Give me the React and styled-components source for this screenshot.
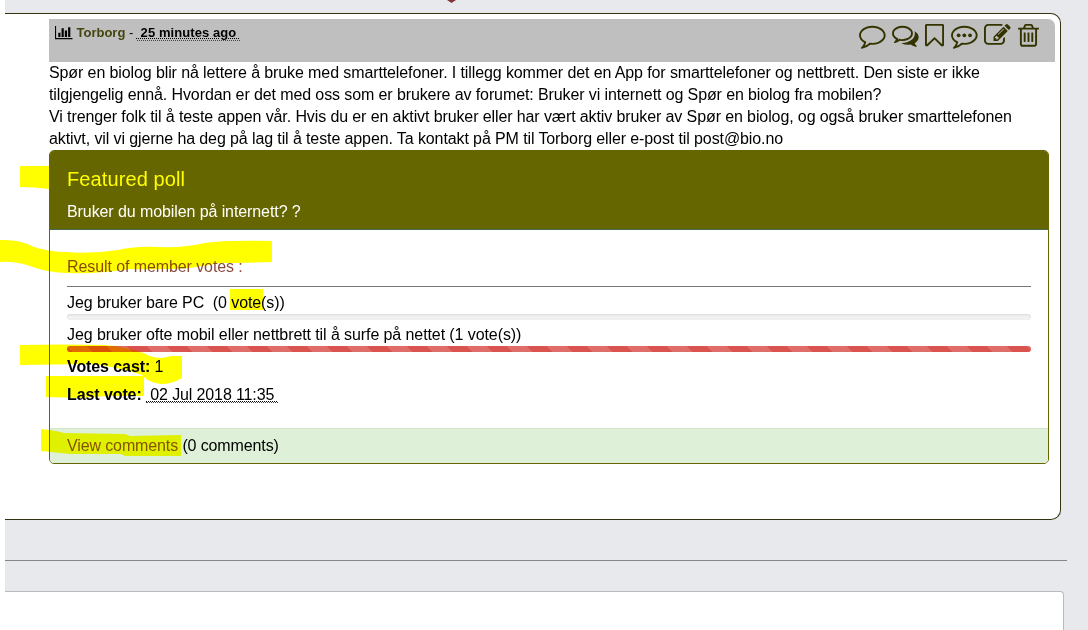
import React from "react";
import styled, { createGlobalStyle } from "styled-components";

const GlobalStyle = createGlobalStyle`
  * { box-sizing: border-box; }
  body {
    margin: 0;
    background: #fff;
    color: #000;
    font: 16px/22px "Liberation Sans", Arial, sans-serif;
    overflow: hidden;
  }
`;

const Page = styled.main`
  position: relative;
  height: 630px;
  margin-left: 5px;
  padding-top: 13px;
  background: #e8e9ed;
  overflow: hidden;
`;

const Post = styled.article`
  width: 1056px;
  height: 507px;
  padding: 5px 5px 0 44px;
  background: #fff;
  border: 1px solid #33330f;
  border-left: 0;
  border-radius: 0 10px 10px 0;
`;

const PostHeader = styled.header`
  display: flex;
  justify-content: space-between;
  height: 43px;
  padding: 3px 16.5px 0 6px;
  background: #bfbfbf;
  border-radius: 0 7px 0 0;
`;

const Byline = styled.div`
  display: flex;
  align-items: center;
  height: 22px;
  font-size: 13px;
  white-space: pre;
`;

const Author = styled.a`
  margin-left: 4px;
  color: #45450f;
  font-weight: bold;
`;

const Stamp = styled.abbr`
  display: inline-block;
  height: ${(p) => (p.$bold ? "16px" : "17px")};
  line-height: ${(p) => (p.$bold ? "16px" : "17px")};
  font-weight: ${(p) => (p.$bold ? "bold" : "normal")};
  letter-spacing: ${(p) => (p.$bold ? "0.08px" : "-0.13px")};
  text-decoration: underline dotted 1px;
  text-underline-offset: 1px;
  text-decoration-skip-ink: auto;
  border-bottom: 1px dotted #444;
  white-space: pre;
`;

const Actions = styled.nav`
  display: flex;
  gap: 6.6px;
  color: #333300;
`;

const Glyph = styled.svg`
  display: block;
  flex: none;
  width: ${(p) => p.$w}px;
  height: ${(p) => p.$h}px;
  fill: currentColor;
`;

const PostBody = styled.p`
  margin: 0;
  letter-spacing: -0.106px;
  white-space: pre;
`;

const Poll = styled.section`
  width: 1000px;
  height: 314px;
  border: 1px solid #666600;
  border-radius: 5px;
  letter-spacing: -0.09px;
  overflow: hidden;
`;

const PollHeader = styled.header`
  height: 79px;
  padding: 16px 17px 0;
  background: #666600;
  border-bottom: 1px solid #4c6a55;
  color: #fff;
`;

const PollTitle = styled.h3`
  margin: 0 0 10px;
  font-size: 20px;
  font-weight: normal;
  line-height: 24px;
  letter-spacing: 0.1px;
  color: #ffff00;
`;

const PollBody = styled.div`
  height: 198px;
  padding: 26px 17px 0;
`;

const ResultHeading = styled.div`
  height: 31px;
  color: #8a4a3c;
  border-bottom: 1px solid #77777a;
`;

const Option = styled.div`
  padding-top: ${(p) => (p.$first ? "5px" : "4px")};
`;

const Track = styled.div`
  height: 6px;
  border-radius: 3px;
  background: #f1f1f1;
  box-shadow: inset 0 1px 2px rgba(0, 0, 0, 0.1);
  overflow: hidden;
`;

const Fill = styled.div`
  height: 100%;
  background-color: #d9534f;
  background-image: linear-gradient(
    45deg,
    rgba(255, 255, 255, 0.15) 25%, transparent 25%, transparent 50%,
    rgba(255, 255, 255, 0.15) 50%, rgba(255, 255, 255, 0.15) 75%, transparent 75%
  );
  background-size: 40px 40px;
`;

const Fact = styled.div`
  height: 28px;
  padding-top: 4px;
  white-space: pre;
`;

const PollFooter = styled.footer`
  height: 35px;
  padding: 6px 17px;
  background: #dff0d8;
  border-top: 1px solid #d3e3cc;
  letter-spacing: -0.12px;
`;

const CommentsLink = styled.a`
  color: #84532b;
`;

const Divider = styled.hr`
  width: 1062px;
  height: 1px;
  margin: 40px 0 30px;
  border: 0;
  background: #85858a;
`;

const NextPanel = styled.section`
  width: 1059px;
  height: 60px;
  background: #fff;
  border: 1px solid #b9b9bf;
  border-left: 0;
  border-radius: 0 4px 4px 0;
`;

const Ink = styled.svg`
  position: absolute;
  left: 0;
  top: 0;
  pointer-events: none;
  mix-blend-mode: multiply;
`;

const bubble =
  "M896 384q-204 0-381.500 69.500t-282 187.500-104.500 255q0 112 71.500 213.500t201.500 175.500l87 50-27 96q-24 91-70 172 152-63 275-171l43-38 57 6q69 8 130 8 204 0 381.500-69.500t282-187.500 104.500-255-104.500-255-282-187.500-381.500-69.500zm896 512q0 174-120 321.500t-326 233-450 85.500q-70 0-145-8-198 175-460 242-49 14-114 22h-5q-15 0-27-10.500t-16-27.500v-1q-3-4-.5-12t2-10 4.500-9.500l6-9 7-8.500 8-9q7-8 31-34.500t34.500-38 31-39.500 32.500-51 27-59 26-76q-157-89-247.500-220t-90.500-281q0-130 71-248.500t191-204.500 286-136.500 348-50.500 348 50.500 286 136.500 191 204.500 71 248.500z";

const actions = [
  { name: "Comment", x: 0, w: 1792, d: bubble },
  {
    name: "Discussion", x: 0, w: 1792,
    d: "M704 384q-153 0-286 52t-211.500 141-78.500 191q0 82 53 158t149 132l97 56-35 84q34-20 62-39l44-31 53 10q78 14 153 14 153 0 286-52t211.500-141 78.500-191-78.500-191-211.500-141-286-52zm0-128q191 0 353.500 68.500t256.500 186.500 94 257-94 257-256.500 186.500-353.500 68.500q-86 0-176-16-124 88-278 128-36 9-86 16h-3q-11 0-20.500-8t-11.500-21q-1-3-1-6.500t.5-6.500 2-6l2.500-5 3.500-5.500 4-5 4.500-5 4-4.500q5-6 23-25t26-29.500 22.500-29 25-38.500 20.500-44q-124-72-195-177t-71-224q0-139 94-257t256.500-186.500 353.500-68.500zm822 1169q10 24 20.500 44t25 38.500 22.500 29 26 29.500 23 25q1 1 4 4.500t4.500 5 4 5 3.500 5.500l2.500 5 2 6 .5 6.500-1 6.500q-3 14-13 22t-22 7q-50-7-86-16-154-40-278-128-90 16-176 16-271 0-472-132 58 4 88 4 161 0 309-45t264-129q125-92 192-212t67-254q0-77-23-152 129 71 204 178t75 230q0 120-71 224.500t-195 176.500z",
  },
  {
    name: "Bookmark", x: 256, w: 1280,
    d: "M1408 256h-1024v1242l423-406 89-85 89 85 423 406v-1242zm12-128q23 0 44 9 33 13 52.500 41t19.500 62v1289q0 34-19.500 62t-52.500 41q-19 8-44 8-48 0-83-32l-441-424-441 424q-36 33-83 33-23 0-44-9-33-13-52.500-41t-19.500-62v-1289q0-34 19.500-62t52.500-41q21-9 44-9h1048z",
  },
  { name: "Reply", x: 0, w: 1792, d: bubble, dots: true },
  {
    name: "Edit", x: 0, w: 1792,
    d: "M888 1184l116-116-152-152-116 116v56h96v96h56zm440-720q-16-16-33 1l-350 350q-17 17-1 33t33-1l350-350q17-17 1-33zm80 594v190q0 119-84.500 203.500t-203.500 84.500h-832q-119 0-203.500-84.500t-84.500-203.500v-832q0-119 84.500-203.500t203.500-84.500h832q63 0 117 25 15 7 18 23 3 17-9 29l-49 49q-14 14-32 8-23-6-45-6h-832q-66 0-113 47t-47 113v832q0 66 47 113t113 47h832q66 0 113-47t47-113v-126q0-13 9-22l64-64q15-15 35-7t20 29zm-96-738l288 288-672 672h-288v-288zm444 132l-92 92-288-288 92-92q28-28 68-28t68 28l152 152q28 28 28 68t-28 68z",
  },
  {
    name: "Delete", x: 192, w: 1408,
    d: "M704 736v576q0 14-9 23t-23 9h-64q-14 0-23-9t-9-23v-576q0-14 9-23t23-9h64q14 0 23 9t9 23zm256 0v576q0 14-9 23t-23 9h-64q-14 0-23-9t-9-23v-576q0-14 9-23t23-9h64q14 0 23 9t9 23zm256 0v576q0 14-9 23t-23 9h-64q-14 0-23-9t-9-23v-576q0-14 9-23t23-9h64q14 0 23 9t9 23zm128 724v-948h-896v948q0 22 7 40.500t14.500 27 10.500 8.500h832q3 0 10.500-8.500t14.500-27 7-40.500zm-672-1076h448l-48-117q-7-9-17-11h-317q-10 2-17 11zm928 32v64q0 14-9 23t-23 9h-96v948q0 83-47 143.500t-113 60.500h-832q-66 0-113-58.500t-47-141.500v-952h-96q-14 0-23-9t-9-23v-64q0-14 9-23t23-9h309l70-167q15-37 54-63t79-26h320q40 0 79 26t54 63l70 167h309q14 0 23 9t9 23z",
  },
];

const EM = 26.67;

function ActionIcon({ icon }) {
  return (
    <Glyph $w={(icon.w / 1792) * EM} $h={EM} viewBox={`${icon.x} 0 ${icon.w} 1792`} aria-label={icon.name}>
      <path d={icon.d} />
      {icon.dots && [512, 896, 1280].map((cx) => <circle key={cx} cx={cx} cy="896" r="128" />)}
    </Glyph>
  );
}

// Felt-pen marks drawn over the page; coordinates start at the window's corner.
const marks = [
  "M20 166H49V189Q34 187 20 187Z",
  "M0 240Q20 239 34 247Q50 252 66 252Q92 254 118 250Q136 246 158 247Q185 248 205 243Q222 240 272 241V262Q240 263 220 263L190 268Q158 270 130 269Q100 274 66 273Q45 272 30 266Q14 261 0 262Z",
  "M230 289H263V310H230Z",
  "M20 345Q60 344 105 345Q128 347 146 354Q152 358 162 358L171 356H182V378Q172 384 161 384Q149 383 142 375Q120 367 90 364L20 365Z",
  "M46 376H144V396Q110 395 80 398L46 397Z",
  "M41 429L56 431L64 433L125 434L130 436L181 435V456H125L121 454L70 454L41 451Z",
];

export default function App() {
  return (
    <>
      <GlobalStyle />
      <Page>
        <Post>
          <PostHeader>
            <Byline>
              <Glyph $w={17.5} $h={15.3} viewBox="0 0 2048 1792">
                <path d="M640 896v512h-256v-512h256zm384-512v1024h-256v-1024h256zm1024 1152v128h-2048v-1536h128v1408h1920zm-640-896v768h-256v-768h256zm384-384v1152h-256v-1152h256z" />
              </Glyph>
              <Author>Torborg</Author>
              {" - "}
              <Stamp $bold>{" 25 minutes ago "}</Stamp>
            </Byline>
            <Actions>
              {actions.map((icon) => <ActionIcon key={icon.name} icon={icon} />)}
            </Actions>
          </PostHeader>
          <PostBody>
            Spør en biolog blir nå lettere å bruke med smarttelefoner. I tillegg kommer det en App for smarttelefoner og nettbrett. Den siste er ikke<br />
            tilgjengelig ennå. Hvordan er det med oss som er brukere av forumet: Bruker vi internett og Spør en biolog fra mobilen?<br />
            Vi trenger folk til å teste appen vår. Hvis du er en aktivt bruker eller har vært aktiv bruker av Spør en biolog, og også bruker smarttelefonen<br />
            aktivt, vil vi gjerne ha deg på lag til å teste appen. Ta kontakt på PM til Torborg eller e-post til post@bio.no
          </PostBody>
          <Poll>
            <PollHeader>
              <PollTitle>Featured poll</PollTitle>
              Bruker du mobilen på internett? ?
            </PollHeader>
            <PollBody>
              <ResultHeading>Result of member votes :</ResultHeading>
              <Option $first>
                Jeg bruker bare PC&nbsp; (0 vote(s))
                <Track />
              </Option>
              <Option>
                Jeg bruker ofte mobil eller nettbrett til å surfe på nettet (1 vote(s))
                <Track><Fill style={{ width: "100%" }} /></Track>
              </Option>
              <Fact><b>Votes cast:</b> 1</Fact>
              <Fact><b>Last vote:</b> <Stamp>{" 02 Jul 2018 11:35 "}</Stamp></Fact>
            </PollBody>
            <PollFooter>
              <CommentsLink>View comments</CommentsLink> (0 comments)
            </PollFooter>
          </Poll>
        </Post>
        <Divider />
        <NextPanel />
        <Ink width="1083" height="630" viewBox="5 0 1083 630">
          <path d="M447 0H456L451.500 3Z" fill="#8e3b3b" />
        </Ink>
      </Page>
      <Ink width="1088" height="630" viewBox="0 0 1088 630" fill="#ffff00">
        {marks.map((d) => <path key={d} d={d} />)}
      </Ink>
    </>
  );
}
